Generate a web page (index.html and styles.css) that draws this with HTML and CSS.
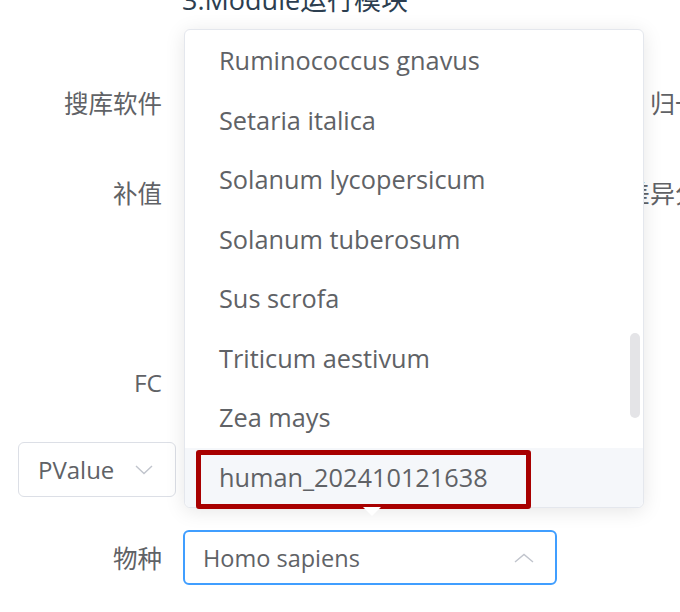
FILE: index.html
```html
<!DOCTYPE html>
<html lang="zh-CN">
<head>
  <meta charset="UTF-8" />
  <title>Module运行模块</title>
  <meta name="viewport" content="width=device-width, initial-scale=1.0" />
  <link rel="stylesheet" href="styles.css">
</head>
<body>
  <div class="page">
    <h2 class="section-title">3.Module运行模块</h2>

    <div class="form">
      <div class="row row-1">
        <label class="row-label">搜库软件</label>
        <div class="field"></div>
        <span class="side-label side-norm">归一化方法</span>
      </div>

      <div class="row row-2">
        <label class="row-label">补值</label>
        <div class="field"></div>
        <span class="side-label side-diff">差异分析</span>
      </div>

      <div class="row row-fc">
        <label class="row-label">FC</label>
        <div class="field"></div>
      </div>

      <div class="row row-p">
        <div class="select select-small">
          <span>PValue</span>
          <svg class="arrow" width="18" height="10" viewBox="0 0 18 10"><path d="M1 1 L9 8.5 L17 1" fill="none" stroke="#c0c4cc" stroke-width="1.4"/></svg>
        </div>
      </div>

      <div class="row row-species">
        <label class="row-label">物种</label>
        <div class="select-wrap">
          <div class="select is-focus">
            <span>Homo sapiens</span>
            <svg class="arrow" width="20" height="10" viewBox="0 0 20 10"><path d="M1 9 L10 1.5 L19 9" fill="none" stroke="#c0c4cc" stroke-width="1.4"/></svg>
          </div>

          <div class="dropdown">
            <ul class="dropdown-list">
              <li>Rattus norvegicus</li>
              <li>Ruminococcus gnavus</li>
              <li>Setaria italica</li>
              <li>Solanum lycopersicum</li>
              <li>Solanum tuberosum</li>
              <li>Sus scrofa</li>
              <li>Triticum aestivum</li>
              <li>Zea mays</li>
              <li class="hover">human_202410121638</li>
            </ul>
            <div class="scrollbar"></div>
            <div class="mark"></div>
            <div class="popper-arrow"></div>
          </div>
        </div>
      </div>
    </div>
  </div>
</body>
</html>
```

FILE: styles.css
```css
body {
  margin: 0;
  background: #ffffff;
  font-family: 'Open Sans', 'Noto Sans CJK SC', sans-serif;
  color: #606266;
  overflow: hidden;
}

.page {
  width: 680px;
  height: 612px;
  position: relative;
  overflow: hidden;
}

.section-title {
  margin: -18px 0 0 182px;
  font-size: 27px;
  font-weight: 400;
  line-height: 36px;
  color: #2c3e50;
  white-space: nowrap;
}

.form {
  margin-top: 56.5px;
}

.row {
  display: flex;
  align-items: center;
  height: 55px;
  white-space: nowrap;
}

.row-1 { margin-bottom: 35px; }
.row-2 { margin-bottom: 135px; }
.row-fc { margin-bottom: 32.5px; }
.row-p { margin-bottom: 33px; }

.row-label {
  width: 162px;
  flex-shrink: 0;
  text-align: right;
  font-size: 24.5px;
  margin-right: 21px;
  color: #606266;
}

.field {
  width: 374px;
  height: 55px;
  flex-shrink: 0;
}

.side-label {
  font-size: 25px;
  color: #606266;
}

.side-norm { margin-left: 93px; }
.side-diff { margin-left: 68px; }

.select {
  box-sizing: border-box;
  width: 374px;
  height: 55px;
  border: 1.5px solid #dcdfe6;
  border-radius: 6px;
  display: flex;
  align-items: center;
  justify-content: space-between;
  padding: 0 21px 0 18px;
  font-size: 23.5px;
  color: #606266;
  flex-shrink: 0;
}

.select-small {
  width: 158px;
  margin-left: 18px;
  padding: 0 22px 0 19px;
  font-size: 24px;
}

.select.is-focus {
  border: 2px solid #409eff;
}

.select-wrap {
  position: relative;
}

.dropdown {
  position: absolute;
  left: 1px;
  bottom: calc(100% + 22px);
  width: 460px;
  height: 479px;
  box-sizing: border-box;
  background: #ffffff;
  border: 1px solid #e4e7ed;
  border-radius: 6px;
  box-shadow: 0 3px 20px rgba(0, 0, 0, 0.1);
  z-index: 10;
}

.dropdown-list {
  list-style: none;
  margin: 0;
  padding: 0;
  height: 100%;
  display: flex;
  flex-direction: column;
  justify-content: flex-end;
  overflow: hidden;
  border-radius: 6px;
}

.dropdown-list li {
  flex-shrink: 0;
  height: 59.5px;
  line-height: 59.5px;
  padding-left: 34px;
  font-size: 25.3px;
  color: #606266;
}

.dropdown-list li.hover {
  background: #f5f7fa;
}

.scrollbar {
  position: absolute;
  right: 3px;
  top: 303px;
  width: 10px;
  height: 85px;
  border-radius: 5px;
  background: #e4e4e7;
}

.mark {
  position: absolute;
  left: 11px;
  bottom: -2px;
  width: 335px;
  height: 59px;
  box-sizing: border-box;
  border: 5px solid #a80000;
  border-radius: 3px;
}

.popper-arrow {
  position: absolute;
  left: 178px;
  bottom: -9px;
  width: 0;
  height: 0;
  border-left: 9px solid transparent;
  border-right: 9px solid transparent;
  border-top: 9px solid #ffffff;
}
```
